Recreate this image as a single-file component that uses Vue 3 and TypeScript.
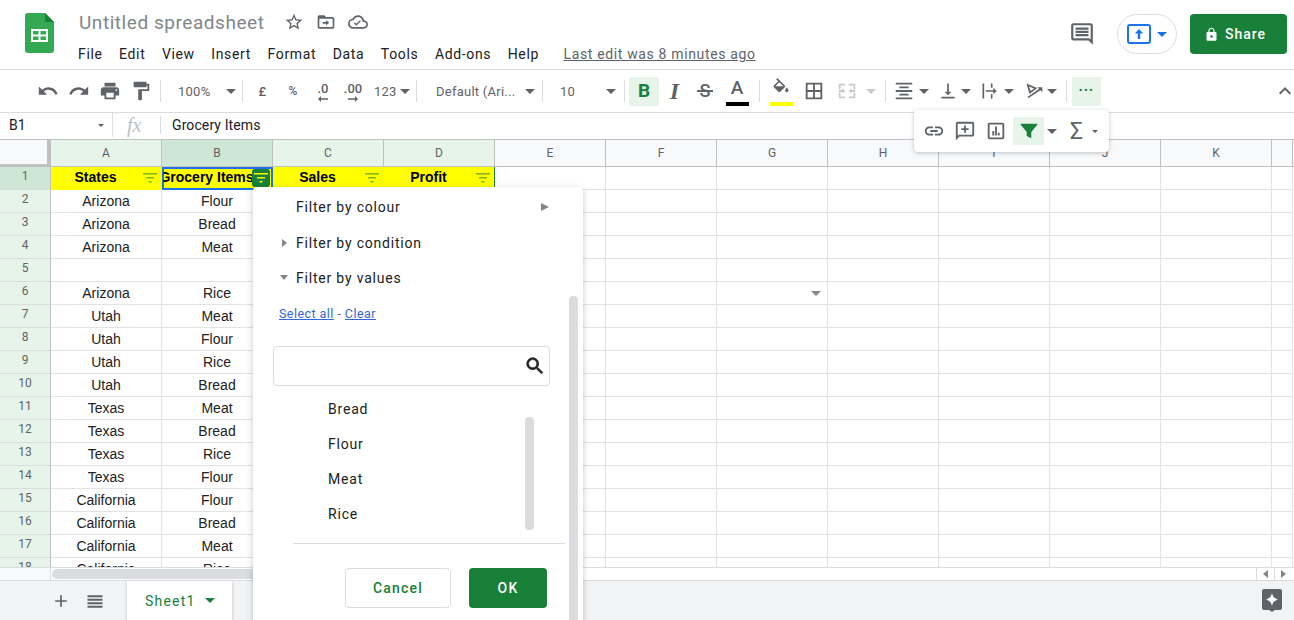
<script setup lang="ts">
type ToolItem = {
  kind: 'icon' | 'caret' | 'sep' | 'label' | 'glyph' | 'decimal'
  w: number
  d?: string
  text?: string
  cls?: string
  bar?: string
  dir?: 'left' | 'right'
}

const icons = {
  undo: 'M12.5 8c-2.65 0-5.05.99-6.9 2.6L2 7v9h9l-3.62-3.62c1.39-1.16 3.16-1.88 5.12-1.88 3.54 0 6.55 2.31 7.6 5.5l2.37-.78C21.08 11.03 17.15 8 12.5 8z',
  redo: 'M18.4 10.6C16.55 8.99 14.15 8 11.5 8c-4.65 0-8.58 3.03-9.96 7.22L3.9 16c1.05-3.19 4.05-5.5 7.6-5.5 1.95 0 3.73.72 5.12 1.88L13 16h9V7l-3.6 3.6z',
  print: 'M19 8H5c-1.66 0-3 1.34-3 3v6h4v4h12v-4h4v-6c0-1.66-1.34-3-3-3zm-3 11H8v-5h8v5zm3-7c-.55 0-1-.45-1-1s.45-1 1-1 1 .45 1 1-.45 1-1 1zm-1-9H6v4h12V3z',
  paint: 'M18 4V3c0-.55-.45-1-1-1H5c-.55 0-1 .45-1 1v4c0 .55.45 1 1 1h12c.55 0 1-.45 1-1V6h1v4H9v11c0 .55.45 1 1 1h2c.55 0 1-.45 1-1v-9h8V4h-3z',
  fill: 'M16.56 8.94L7.62 0 6.21 1.41l2.38 2.38-5.15 5.15c-.59.59-.59 1.54 0 2.12l5.5 5.5c.29.29.68.44 1.06.44s.77-.15 1.06-.44l5.5-5.5c.59-.58.59-1.53 0-2.12zM5.21 10L10 5.21 14.79 10H5.21zM19 11.5s-2 2.17-2 3.5c0 1.1.9 2 2 2s2-.9 2-2c0-1.33-2-3.5-2-3.5z',
  borders: 'M3 3v18h18V3H3zm8 16H5v-6h6v6zm0-8H5V5h6v6zm8 8h-6v-6h6v6zm0-8h-6V5h6v6z',
  merge: 'M5 10H3V4h7v2H5v4zm14 0h2V4h-7v2h5v4zM5 14H3v6h7v-2H5v-4zm14 0h2v6h-7v-2h5v-4zM3 11h4V9l3 3-3 3v-2H3zM21 11h-4V9l-3 3 3 3v-2h4z',
  halign: 'M3 21h18v-2H3v2zm4-4h10v-2H7v2zm-4-4h18v-2H3v2zm4-4h10V7H7v2zM3 3v2h18V3H3z',
  valign: 'M16 13h-3V3h-2v10H8l4 4 4-4zM4 19v2h16v-2H4z',
  wrap: 'M3 3h2v18H3zM13 3h2v5h-2zM13 16h2v5h-2zM7 11h9V8l4 4-4 4v-3H7z',
  rotate: 'M3 3l13 5.5-9.5 7L3 3zm3 3.6l2 5.4 4-3-6-2.4zM5.500 20.500l-1.400-1.400L18 9.600 16 7.500h6v6l-2.200-2.400L5.500 20.500z',
  chevron: 'M7.41 15.41L12 10.83l4.59 4.58L18 14l-6-6-6 6z',
  star: 'M22 9.24l-7.19-.62L12 2 9.19 8.63 2 9.24l5.46 4.73L5.82 21 12 17.27 18.18 21l-1.63-7.03L22 9.24zM12 15.4l-3.76 2.27 1-4.28-3.32-2.88 4.38-.38L12 6.1l1.71 4.04 4.38.38-3.32 2.88 1 4.28L12 15.4z',
  folder: 'M20 6h-8l-2-2H4c-1.1 0-2 .9-2 2v12c0 1.1.9 2 2 2h16c1.1 0 2-.9 2-2V8c0-1.1-.9-2-2-2zm0 12H4V8h16v10zM12 16l4-3-4-3v2H8v2h4z',
  cloud: 'M19.35 10.04C18.67 6.59 15.64 4 12 4 9.11 4 6.6 5.64 5.35 8.04 2.34 8.36 0 10.91 0 14c0 3.31 2.69 6 6 6h13c2.76 0 5-2.24 5-5 0-2.64-2.05-4.78-4.65-4.96zM19 18H6c-2.21 0-4-1.79-4-4 0-2.05 1.53-3.76 3.56-3.97l1.07-.11.5-.95C8.08 7.14 9.94 6 12 6c2.62 0 4.88 1.86 5.39 4.43l.3 1.5 1.53.11c1.56.1 2.78 1.41 2.78 2.96 0 1.65-1.35 3-3 3zm-9-1.6l-2.9-2.9 1.2-1.2 1.7 1.7 4.2-4.2 1.2 1.2z',
  comment: 'M21.99 4c0-1.1-.89-2-1.99-2H4c-1.1 0-2 .9-2 2v12c0 1.1.9 2 2 2h14l4 4-.01-18zM20 4v13.17L18.83 16H4V4h16zM6 12h12v2H6zm0-3h12v2H6zm0-3h12v2H6z',
  lock: 'M18 8h-1V6c0-2.76-2.24-5-5-5S7 3.24 7 6v2H6c-1.1 0-2 .9-2 2v10c0 1.1.9 2 2 2h12c1.1 0 2-.9 2-2V10c0-1.1-.9-2-2-2zm-6 9c-1.1 0-2-.9-2-2s.9-2 2-2 2 .9 2 2-.9 2-2 2zm3.1-9H8.9V6c0-1.71 1.39-3.1 3.1-3.1 1.71 0 3.1 1.39 3.1 3.1v2z',
  link: 'M3.9 12c0-1.71 1.39-3.1 3.1-3.1h4V7H7c-2.76 0-5 2.24-5 5s2.24 5 5 5h4v-1.9H7c-1.71 0-3.1-1.39-3.1-3.1zM8 13h8v-2H8v2zm9-6h-4v1.9h4c1.71 0 3.1 1.39 3.1 3.1s-1.39 3.1-3.1 3.1h-4V17h4c2.76 0 5-2.24 5-5s-2.24-5-5-5z',
  addComment: 'M2.01 4c0-1.1.89-2 1.99-2h16c1.1 0 2 .9 2 2v12c0 1.1-.9 2-2 2H6l-4 4 .01-18zM4 4v13.17L5.17 16H20V4H4zM11 6h2v3h3v2h-3v3h-2v-3H8V9h3z',
  chart: 'M19 3H5c-1.1 0-2 .9-2 2v14c0 1.1.9 2 2 2h14c1.1 0 2-.9 2-2V5c0-1.1-.9-2-2-2zm0 16H5V5h14v14zM8 12h2v5H8zm3-5h2v10h-2zm3 7h2v3h-2z',
  filter: 'M3.5 4h17c.6 0 .9.7.5 1.2L14.5 13v7l-5-2.500V13L3 5.200C2.600 4.700 2.900 4 3.500 4z',
  search: 'M15.5 14h-.79l-.28-.27C15.41 12.59 16 11.11 16 9.5 16 5.91 13.09 3 9.5 3S3 5.91 3 9.5 5.91 16 9.5 16c1.61 0 3.09-.59 4.23-1.57l.27.28v.79l5 4.99L20.49 19l-4.99-5zm-6 0C7.01 14 5 11.99 5 9.5S7.01 5 9.5 5 14 7.01 14 9.5 11.99 14 9.5 14z',
  plus: 'M19 13h-6v6h-2v-6H5v-2h6V5h2v6h6v2z',
  list: 'M3 5h18v2.400H3zM3 9.200h18v2.400H3zM3 13.400h18v2.400H3zM3 17.600h18V20H3z',
}

const menus = ['File', 'Edit', 'View', 'Insert', 'Format', 'Data', 'Tools', 'Add-ons', 'Help']

const tools: ToolItem[] = [
  { kind: 'icon', w: 31, d: icons.undo },
  { kind: 'icon', w: 31, d: icons.redo },
  { kind: 'icon', w: 31, d: icons.print },
  { kind: 'icon', w: 31, d: icons.paint },
  { kind: 'sep', w: 9 },
  { kind: 'label', w: 58, text: '100%', cls: 'pad-13' },
  { kind: 'caret', w: 15 },
  { kind: 'sep', w: 9 },
  { kind: 'label', w: 31, text: '£', cls: 'center' },
  { kind: 'label', w: 30, text: '%', cls: 'center small' },
  { kind: 'decimal', w: 30, text: '.0', dir: 'left' },
  { kind: 'decimal', w: 30, text: '.00', dir: 'right' },
  { kind: 'label', w: 29, text: '123', cls: 'pad-6' },
  { kind: 'caret', w: 15 },
  { kind: 'sep', w: 9 },
  { kind: 'label', w: 100, text: 'Default (Ari...', cls: 'pad-15' },
  { kind: 'caret', w: 17 },
  { kind: 'sep', w: 9 },
  { kind: 'label', w: 55, text: '10', cls: 'pad-13' },
  { kind: 'caret', w: 18 },
  { kind: 'sep', w: 9 },
  { kind: 'glyph', w: 30, text: 'B', cls: 'bold on' },
  { kind: 'glyph', w: 31, text: 'I', cls: 'italic' },
  { kind: 'glyph', w: 30, text: 'S', cls: 'strike' },
  { kind: 'glyph', w: 34, text: 'A', cls: 'letter', bar: 'black' },
  { kind: 'sep', w: 10 },
  { kind: 'icon', w: 34, d: icons.fill, bar: 'yellow' },
  { kind: 'icon', w: 32, d: icons.borders },
  { kind: 'icon', w: 34, d: icons.merge, cls: 'off' },
  { kind: 'caret', w: 14, cls: 'off' },
  { kind: 'sep', w: 14 },
  { kind: 'icon', w: 24, d: icons.halign },
  { kind: 'caret', w: 15 },
  { kind: 'icon', w: 27, d: icons.valign, cls: 'pad-left' },
  { kind: 'caret', w: 16 },
  { kind: 'icon', w: 26, d: icons.wrap, cls: 'pad-left' },
  { kind: 'caret', w: 17 },
  { kind: 'icon', w: 27, d: icons.rotate, cls: 'pad-left' },
  { kind: 'caret', w: 16 },
  { kind: 'sep', w: 12 },
  { kind: 'glyph', w: 29, text: '•••', cls: 'more on' },
]

const columns = ['A', 'B', 'C', 'D', 'E', 'F', 'G', 'H', 'I', 'J', 'K', '']
const heads = ['States', 'Grocery Items', 'Sales', 'Profit']

const rows: [string, string][] = [
  ['Arizona', 'Flour'],
  ['Arizona', 'Bread'],
  ['Arizona', 'Meat'],
  ['', ''],
  ['Arizona', 'Rice'],
  ['Utah', 'Meat'],
  ['Utah', 'Flour'],
  ['Utah', 'Rice'],
  ['Utah', 'Bread'],
  ['Texas', 'Meat'],
  ['Texas', 'Bread'],
  ['Texas', 'Rice'],
  ['Texas', 'Flour'],
  ['California', 'Flour'],
  ['California', 'Bread'],
  ['California', 'Meat'],
  ['California', 'Rice'],
]

const values = ['Bread', 'Flour', 'Meat', 'Rice']
const blanks = columns.slice(2)
</script>

<template>
  <div class="app">
    <header class="top">
      <svg class="logo" viewBox="0 0 29 40" width="29" height="40">
        <path d="M3 0h17l9 9v28a3 3 0 0 1-3 3H3a3 3 0 0 1-3-3V3a3 3 0 0 1 3-3z" fill="#34a853" />
        <path d="M20 0l9 9h-9z" fill="#188038" />
        <path d="M6 16h17v13H6zm2 2v3.500h5.500V18zm7.500 0v3.500H21V18zM8 23.500V27h5.500v-3.500zm7.500 0V27H21v-3.500z" fill="#fff" fill-rule="evenodd" />
      </svg>
      <div class="doc">
        <div class="title-row">
          <span class="title">Untitled spreadsheet</span>
          <svg class="t-icon first" viewBox="0 0 24 24"><path :d="icons.star" /></svg>
          <svg class="t-icon" viewBox="0 0 24 24"><path :d="icons.folder" /></svg>
          <svg class="t-icon" viewBox="0 0 24 24"><path :d="icons.cloud" /></svg>
        </div>
        <nav class="menu-row">
          <span v-for="m in menus" :key="m" class="menu">{{ m }}</span>
          <span class="last-edit">Last edit was 8 minutes ago</span>
        </nav>
      </div>
      <div class="top-right">
        <svg class="comments" viewBox="0 0 24 24"><path :d="icons.comment" /></svg>
        <button class="present">
          <svg viewBox="0 0 24 20" width="24" height="20">
            <rect x="1" y="1" width="22" height="18" rx="2" fill="none" stroke="#1a73e8" stroke-width="2" />
            <path d="M12 5l4.200 4.500h-3V15h-2.400V9.500h-3z" fill="#1a73e8" />
          </svg>
          <i class="caret blue"></i>
        </button>
        <button class="share">
          <svg viewBox="0 0 24 24" width="15" height="15"><path :d="icons.lock" fill="#fff" /></svg>
          Share
        </button>
      </div>
    </header>

    <div class="toolbar">
      <template v-for="(t, i) in tools" :key="i">
        <span v-if="t.kind === 'sep'" class="tool" :style="{ width: t.w + 'px' }"><i class="sep"></i></span>
        <span v-else-if="t.kind === 'caret'" class="tool" :class="t.cls" :style="{ width: t.w + 'px' }"><i class="caret"></i></span>
        <span v-else-if="t.kind === 'label'" class="tool label" :class="t.cls" :style="{ width: t.w + 'px' }">{{ t.text }}</span>
        <span v-else-if="t.kind === 'decimal'" class="tool decimal" :style="{ width: t.w + 'px' }">
          <span>{{ t.text }}</span>
          <svg viewBox="0 0 10 6" width="10" height="6" :class="t.dir"><path d="M0 2.300h7V0l3 3-3 3V3.700H0z" /></svg>
        </span>
        <span v-else-if="t.kind === 'glyph'" class="tool glyph" :class="t.cls" :style="{ width: t.w + 'px' }">
          <span class="glyph-text">{{ t.text }}</span>
          <i v-if="t.bar" class="bar" :class="t.bar"></i>
        </span>
        <span v-else class="tool" :class="[t.cls, { stacked: t.bar }]" :style="{ width: t.w + 'px' }">
          <svg class="tool-icon" viewBox="0 0 24 24"><path :d="t.d" fill-rule="evenodd" /></svg>
          <i v-if="t.bar" class="bar" :class="t.bar"></i>
        </span>
      </template>
      <svg class="collapse" viewBox="0 0 24 24"><path :d="icons.chevron" /></svg>
    </div>

    <div class="formula">
      <div class="name-box">B1<i class="caret tiny"></i></div>
      <div class="fx">fx</div>
      <div class="f-value">Grocery Items</div>
    </div>

    <div class="col-heads">
      <div class="corner"></div>
      <div
        v-for="(c, i) in columns"
        :key="i"
        class="col-head"
        :class="{ ranged: i < 4, picked: i === 1 }"
      >{{ c }}</div>
    </div>

    <div class="grid">
      <div class="row head-row">
        <div class="row-head picked">1</div>
        <div
          v-for="(h, i) in heads"
          :key="h"
          class="cell head"
          :class="{ 'sel-cell': i === 1 }"
        >
          <span class="head-text">{{ h }}</span>
          <svg class="f-btn" :class="{ active: i === 1 }" viewBox="0 0 18 18" width="18" height="18">
            <path d="M2 4h14v1.500H2zM5 8h8v1.500H5zM7.500 12h3v1.500h-3z" />
          </svg>
          <i v-if="i === 1" class="handle"></i>
        </div>
        <div v-for="n in 8" :key="n" class="cell"></div>
      </div>
      <div v-for="(r, ri) in rows" :key="ri" class="row">
        <div class="row-head">{{ ri + 2 }}</div>
        <div class="cell">{{ r[0] }}</div>
        <div class="cell">{{ r[1] }}</div>
        <div v-for="(b, bi) in blanks" :key="bi" class="cell">
          <i v-if="ri === 4 && b === 'G'" class="caret valid"></i>
        </div>
      </div>
    </div>

    <div class="hscroll">
      <div class="hscroll-corner"></div>
      <div class="hscroll-track">
        <div class="thumb"></div>
        <div class="nudge"><i class="tri left"></i></div>
        <div class="nudge"><i class="tri"></i></div>
      </div>
    </div>

    <footer class="tabs">
      <svg class="tab-icon plus" viewBox="0 0 24 24"><path :d="icons.plus" /></svg>
      <svg class="tab-icon" viewBox="0 0 24 24"><path :d="icons.list" /></svg>
      <div class="tab">Sheet1<i class="caret green"></i></div>
      <svg class="explore" viewBox="0 0 20 23" width="20" height="23">
        <path d="M2 0h16a2 2 0 0 1 2 2v17a2 2 0 0 1-2 2h-5l-3 2-3-2H2a2 2 0 0 1-2-2V2a2 2 0 0 1 2-2z" fill="#5f6368" />
        <path d="M10 4c.8 3.500 2 5 6 6.500-4 1.500-5.200 3-6 6.500-.8-3.500-2-5-6-6.500 4-1.500 5.200-3 6-6.500z" fill="#fff" />
      </svg>
    </footer>

    <div class="float-bar">
      <svg class="fb-icon" viewBox="0 0 24 24"><path :d="icons.link" /></svg>
      <svg class="fb-icon" viewBox="0 0 24 24"><path :d="icons.addComment" fill-rule="evenodd" /></svg>
      <svg class="fb-icon" viewBox="0 0 24 24"><path :d="icons.chart" fill-rule="evenodd" /></svg>
      <span class="fb-filter"><svg viewBox="0 0 24 24" width="22" height="22"><path :d="icons.filter" fill="#188038" /></svg></span>
      <i class="caret fb-caret"></i>
      <span class="sigma">Σ</span>
      <i class="caret tiny fb-caret2"></i>
    </div>

    <div class="filter-menu">
      <div class="fm-row first-row">
        <span>Filter by colour</span>
        <i class="tri big"></i>
      </div>
      <div class="fm-row"><i class="tri side"></i><span>Filter by condition</span></div>
      <div class="fm-row"><i class="tri down"></i><span>Filter by values</span></div>
      <div class="fm-links"><a>Select all</a> - <a>Clear</a></div>
      <div class="fm-search">
        <svg viewBox="0 0 24 24" width="22" height="22"><path :d="icons.search" fill="#202124" stroke="#202124" stroke-width="0.8" /></svg>
      </div>
      <ul class="fm-values">
        <li v-for="v in values" :key="v">{{ v }}</li>
      </ul>
      <div class="fm-divider"></div>
      <div class="fm-actions">
        <button class="cancel">Cancel</button>
        <button class="ok">OK</button>
      </div>
      <div class="fm-scroll-inner"></div>
      <div class="fm-scroll-outer"></div>
    </div>
  </div>
</template>

<style scoped>
.app {
  position: relative;
  display: flex;
  flex-direction: column;
  width: 1294px;
  height: 620px;
  overflow: hidden;
  background: #fff;
  font-family: Roboto, "Liberation Sans", sans-serif;
  color: #202124;
}

.top {
  display: flex;
  flex: 0 0 70px;
  box-sizing: border-box;
  padding: 14px 7px 0 25px;
  border-bottom: 1px solid #dadce0;
}
.logo {
  flex: none;
  margin-top: -1px;
}
.doc {
  margin-left: 25px;
  margin-top: -5px;
}
.title-row {
  display: flex;
  align-items: center;
  height: 26px;
}
.title {
  font-size: 19px;
  letter-spacing: 0.55px;
  color: #80868b;
  width: 185px;
  white-space: nowrap;
}
.t-icon {
  width: 20px;
  height: 20px;
  fill: #5f6368;
  margin-right: 12px;
}
.t-icon.first {
  margin-left: 20px;
}
.menu-row {
  display: flex;
  align-items: center;
  margin-top: 9px;
  margin-left: -1px;
  height: 20px;
  font-size: 14px;
  letter-spacing: 0.65px;
}
.menu {
  margin-right: 16.500px;
  color: #202124;
}
.last-edit {
  margin-left: 8px;
  color: #5f6368;
  text-decoration: underline;
  letter-spacing: 0.65px;
}
.top-right {
  display: flex;
  margin-left: auto;
  height: 40px;
  align-items: center;
}
.comments {
  width: 26px;
  height: 26px;
  fill: #5f6368;
  margin-right: 22px;
}
.present {
  display: flex;
  align-items: center;
  justify-content: center;
  gap: 6px;
  width: 60px;
  height: 40px;
  padding: 0;
  border: 1px solid #dadce0;
  border-radius: 20px;
  background: #fff;
  margin-right: 13px;
}
.share {
  display: flex;
  align-items: center;
  gap: 6px;
  width: 97px;
  height: 40px;
  padding: 0 0 0 14px;
  border: 0;
  border-radius: 4px;
  background: #188038;
  color: #fff;
  font: 500 14px Roboto, sans-serif;
  letter-spacing: 1px;
}

.toolbar {
  display: flex;
  align-items: center;
  flex: 0 0 43px;
  box-sizing: border-box;
  padding-left: 32px;
  border-bottom: 1px solid #dadce0;
}
.tool {
  position: relative;
  display: flex;
  flex: none;
  align-items: center;
  justify-content: center;
  height: 29px;
  box-sizing: border-box;
  border-radius: 2px;
}
.tool-icon {
  width: 22px;
  height: 22px;
  fill: #5f6368;
}
.off .tool-icon {
  fill: #c9cbce;
}
.off .caret {
  border-top-color: #c9cbce;
}
.pad-left {
  justify-content: flex-end;
}
.pad-left .tool-icon {
  width: 20px;
  height: 20px;
}
.stacked .tool-icon {
  margin-bottom: 6px;
  width: 20px;
  height: 20px;
}
.sep {
  display: block;
  width: 1px;
  height: 22px;
  background: #dadce0;
}
.label {
  justify-content: flex-start;
  font-size: 13px;
  letter-spacing: 0.25px;
  color: #5f6368;
}
.label.center {
  justify-content: center;
  font-weight: 500;
}
.label.small {
  font-size: 12px;
}
.pad-13 {
  padding-left: 13px;
}
.pad-6 {
  padding-left: 6px;
}
.pad-15 {
  padding-left: 15px;
}
.decimal {
  flex-direction: column;
  font-size: 13px;
  font-weight: 500;
  line-height: 13px;
  color: #5f6368;
}
.decimal span {
  margin-top: 2px;
}
.decimal svg {
  fill: #5f6368;
  margin-top: 1px;
}
.decimal svg.left {
  transform: scaleX(-1);
}
.glyph {
  color: #5f6368;
  font-size: 18px;
  line-height: 20px;
}
.glyph.on {
  background: #e6f4ea;
  color: #188038;
}
.bold {
  font-weight: 700;
  font-size: 19px;
}
.italic {
  font-family: "Liberation Serif", serif;
  font-style: italic;
  font-weight: 700;
  font-size: 24px;
}
.strike {
  font-size: 18px;
  font-weight: 500;
}
.strike::after {
  content: "";
  position: absolute;
  left: 7px;
  right: 7px;
  top: 13px;
  height: 2px;
  background: #5f6368;
}
.letter {
  padding-bottom: 7px;
  font-size: 19px;
  font-weight: 500;
}
.more {
  font-size: 11px;
  letter-spacing: 1.5px;
}
.bar {
  position: absolute;
  left: 50%;
  bottom: 0;
  width: 23px;
  height: 4px;
  margin-left: -11.500px;
}
.bar.black {
  background: #000;
}
.bar.yellow {
  background: #ff0;
}
.collapse {
  width: 24px;
  height: 24px;
  margin-left: auto;
  margin-right: -3px;
  fill: #5f6368;
}

.caret {
  display: block;
  width: 0;
  height: 0;
  border-left: 5px solid transparent;
  border-right: 5px solid transparent;
  border-top: 5px solid #5f6368;
}
.caret.tiny {
  border-left-width: 3px;
  border-right-width: 3px;
  border-top-width: 3px;
}
.caret.blue {
  border-top-color: #1a73e8;
}
.caret.green {
  border-top-color: #188038;
  margin-left: 9px;
}
.caret.valid {
  position: absolute;
  right: 6px;
  top: 9px;
  border-top-color: #80868b;
}

.formula {
  display: flex;
  align-items: center;
  flex: 0 0 27px;
  box-sizing: border-box;
  padding-bottom: 2px;
  border-bottom: 1px solid #bdc1c6;
  font-size: 14px;
}
.name-box {
  display: flex;
  align-items: center;
  justify-content: space-between;
  box-sizing: border-box;
  width: 113px;
  height: 24px;
  padding: 0 8px 0 9px;
  border-right: 1px solid #e0e0e0;
}
.fx {
  box-sizing: border-box;
  width: 48px;
  height: 18px;
  padding-left: 14px;
  border-right: 1px solid #dadce0;
  font: italic 20px/18px "Liberation Serif", serif;
  color: #bdc1c6;
}
.f-value {
  padding-left: 11px;
  letter-spacing: 0.1px;
}

.col-heads {
  display: flex;
  flex: 0 0 26px;
  box-sizing: border-box;
  border-bottom: 1px solid #c0c0c0;
  background: #f8f9fa;
}
.corner {
  flex: none;
  box-sizing: border-box;
  width: 51px;
  border-right: 4px solid #c0c0c0;
  border-bottom: 3px solid #c0c0c0;
  margin-bottom: -1px;
}
.col-head {
  flex: none;
  box-sizing: border-box;
  width: 111px;
  border-right: 1px solid #c0c0c0;
  text-align: center;
  font-size: 12px;
  line-height: 26px;
  color: #5f6368;
}
.col-head:last-child {
  width: 21px;
}
.ranged {
  background: #e6f4ea;
}
.picked {
  background: #cde6d6;
}

.grid {
  flex: 1;
  min-height: 0;
  overflow: hidden;
}
.row {
  display: flex;
  height: 23px;
}
.row-head {
  flex: none;
  box-sizing: border-box;
  width: 51px;
  padding-top: 1px;
  border-right: 1px solid #c0c0c0;
  border-bottom: 1px solid #dadce0;
  background: #e6f4ea;
  text-align: center;
  font-size: 12px;
  line-height: 16px;
  color: #5f6368;
}
.row-head.picked {
  background: #cde6d6;
}
.cell {
  position: relative;
  flex: none;
  display: flex;
  align-items: center;
  justify-content: center;
  box-sizing: border-box;
  width: 111px;
  padding-bottom: 1px;
  border-right: 1px solid #e2e3e3;
  border-bottom: 1px solid #e2e3e3;
  font: 14px "Liberation Sans", Arial, sans-serif;
  color: #222;
  white-space: nowrap;
  overflow: hidden;
}
.cell:last-child {
  width: 21px;
}
.cell.head {
  padding-right: 21px;
  padding-bottom: 3px;
  background: #ff0;
  border-bottom: 0;
  border-right: 1px solid #ff0;
  font-weight: 700;
  color: #000;
  overflow: visible;
}
.cell.head:nth-child(5) {
  border-right: 1px solid #188038;
}
.head-text {
  display: block;
  flex: none;
}
.sel-cell .head-text {
  clip-path: inset(0 0 0 4px);
}
.sel-cell {
  outline: 2px solid #1a73e8;
  outline-offset: -2px;
  z-index: 2;
}
.f-btn {
  position: absolute;
  right: 2px;
  top: 2px;
  fill: #7cb518;
}
.f-btn.active {
  right: 2px;
  background: #188038;
  border-radius: 3px;
  fill: #ff0;
}
.handle {
  position: absolute;
  right: -3px;
  bottom: -3px;
  width: 6px;
  height: 4px;
  background: #1a73e8;
  border: 1px solid #fff;
}

.hscroll {
  display: flex;
  flex: 0 0 14px;
  box-sizing: border-box;
  border-top: 1px solid #dadce0;
  border-bottom: 1px solid #dadce0;
}
.hscroll-corner {
  flex: none;
  width: 50px;
  border-right: 1px solid #dadce0;
  background: #f8f9fa;
}
.hscroll-track {
  display: flex;
  flex: 1;
  align-items: stretch;
  padding-right: 2px;
}
.thumb {
  flex: none;
  width: 500px;
  margin: 1px auto 1px 1px;
  border-radius: 6px;
  background: #dadce0;
}
.nudge {
  display: flex;
  align-items: center;
  justify-content: center;
  width: 17px;
  border-left: 1px solid #dadce0;
}

.tri {
  display: block;
  width: 0;
  height: 0;
  border-top: 4px solid transparent;
  border-bottom: 4px solid transparent;
  border-left: 5px solid #80868b;
}
.tri.left {
  border-left: 0;
  border-right: 5px solid #80868b;
}
.tri.big {
  margin-left: auto;
  margin-right: 34px;
  border-top-width: 4px;
  border-bottom-width: 4px;
  border-left-width: 8px;
}
.tri.side {
  margin-left: 29px;
  margin-right: 9px;
}
.tri.down {
  margin-left: 27px;
  margin-right: 8px;
  border-left: 4px solid transparent;
  border-right: 4px solid transparent;
  border-top: 5px solid #80868b;
  border-bottom: 0;
}

.tabs {
  display: flex;
  align-items: center;
  flex: 0 0 39px;
  padding-left: 51px;
  background: #f1f3f4;
}
.tab-icon {
  width: 20px;
  height: 20px;
  margin-right: 14px;
  fill: #5f6368;
}
.tab {
  display: flex;
  align-items: center;
  box-sizing: border-box;
  width: 105px;
  height: 39px;
  margin-left: 8px;
  padding-left: 18px;
  background: #fff;
  box-shadow: 0 1px 3px rgba(60, 64, 67, 0.3);
  color: #188038;
  font-size: 14px;
  letter-spacing: 1.2px;
}
.explore {
  margin-left: auto;
  margin-right: 12px;
}

.float-bar {
  position: absolute;
  left: 914px;
  top: 110px;
  display: flex;
  align-items: center;
  box-sizing: border-box;
  width: 195px;
  height: 42px;
  padding-left: 9px;
  border-radius: 4px;
  background: #fff;
  box-shadow: 0 1px 4px rgba(60, 64, 67, 0.3);
  z-index: 5;
}
.fb-icon {
  flex: none;
  width: 22px;
  height: 22px;
  margin-right: 9px;
  fill: #5f6368;
}
.fb-filter {
  display: flex;
  align-items: center;
  justify-content: center;
  width: 31px;
  height: 28px;
  margin-left: -3px;
  background: #e6f4ea;
}
.fb-caret {
  margin-left: 3px;
}
.sigma {
  margin-left: 13px;
  font-size: 23px;
  color: #5f6368;
}
.fb-caret2 {
  margin-left: 9px;
}

.filter-menu {
  position: absolute;
  left: 253px;
  top: 187px;
  box-sizing: border-box;
  width: 330px;
  height: 450px;
  border-radius: 4px;
  background: #fff;
  box-shadow: 0 2px 6px rgba(60, 64, 67, 0.3);
  font-size: 14px;
  letter-spacing: 0.8px;
  z-index: 4;
}
.fm-row {
  display: flex;
  align-items: center;
  height: 35px;
}
.first-row {
  box-sizing: border-box;
  height: 38px;
  padding: 2px 0 0 43px;
}
.fm-links {
  margin: 9px 0 0 26px;
  font-size: 12.500px;
  letter-spacing: 0.45px;
  color: #5f6368;
  line-height: 20px;
}
.fm-links a {
  color: #3367d6;
  text-decoration: underline;
}
.fm-search {
  display: flex;
  align-items: center;
  justify-content: flex-end;
  box-sizing: border-box;
  width: 277px;
  height: 40px;
  margin: 22px 0 0 20px;
  padding-right: 3px;
  border: 1px solid #dadce0;
  border-radius: 4px;
}
.fm-values {
  margin: 6px 0 0;
  padding: 0 0 0 75px;
  list-style: none;
}
.fm-values li {
  height: 35px;
  line-height: 35px;
}
.fm-divider {
  height: 1px;
  margin: 11px 18px 0 40px;
  background: #dadce0;
}
.fm-actions {
  display: flex;
  gap: 18px;
  margin: 24px 0 0 92px;
}
.fm-actions button {
  height: 40px;
  border-radius: 4px;
  font: 500 14px Roboto, sans-serif;
  letter-spacing: 1.2px;
}
.cancel {
  width: 106px;
  border: 1px solid #dadce0;
  background: #fff;
  color: #188038;
}
.ok {
  width: 78px;
  border: 0;
  background: #188038;
  color: #fff;
}
.fm-scroll-inner {
  position: absolute;
  left: 272px;
  top: 230px;
  width: 9px;
  height: 113px;
  border-radius: 4px;
  background: #dadce0;
}
.fm-scroll-outer {
  position: absolute;
  left: 316px;
  top: 109px;
  width: 9px;
  height: 330px;
  border-radius: 4px;
  background: #dadce0;
}
</style>

<style>
html,
body {
  margin: 0;
  background: #fff;
}
</style>
